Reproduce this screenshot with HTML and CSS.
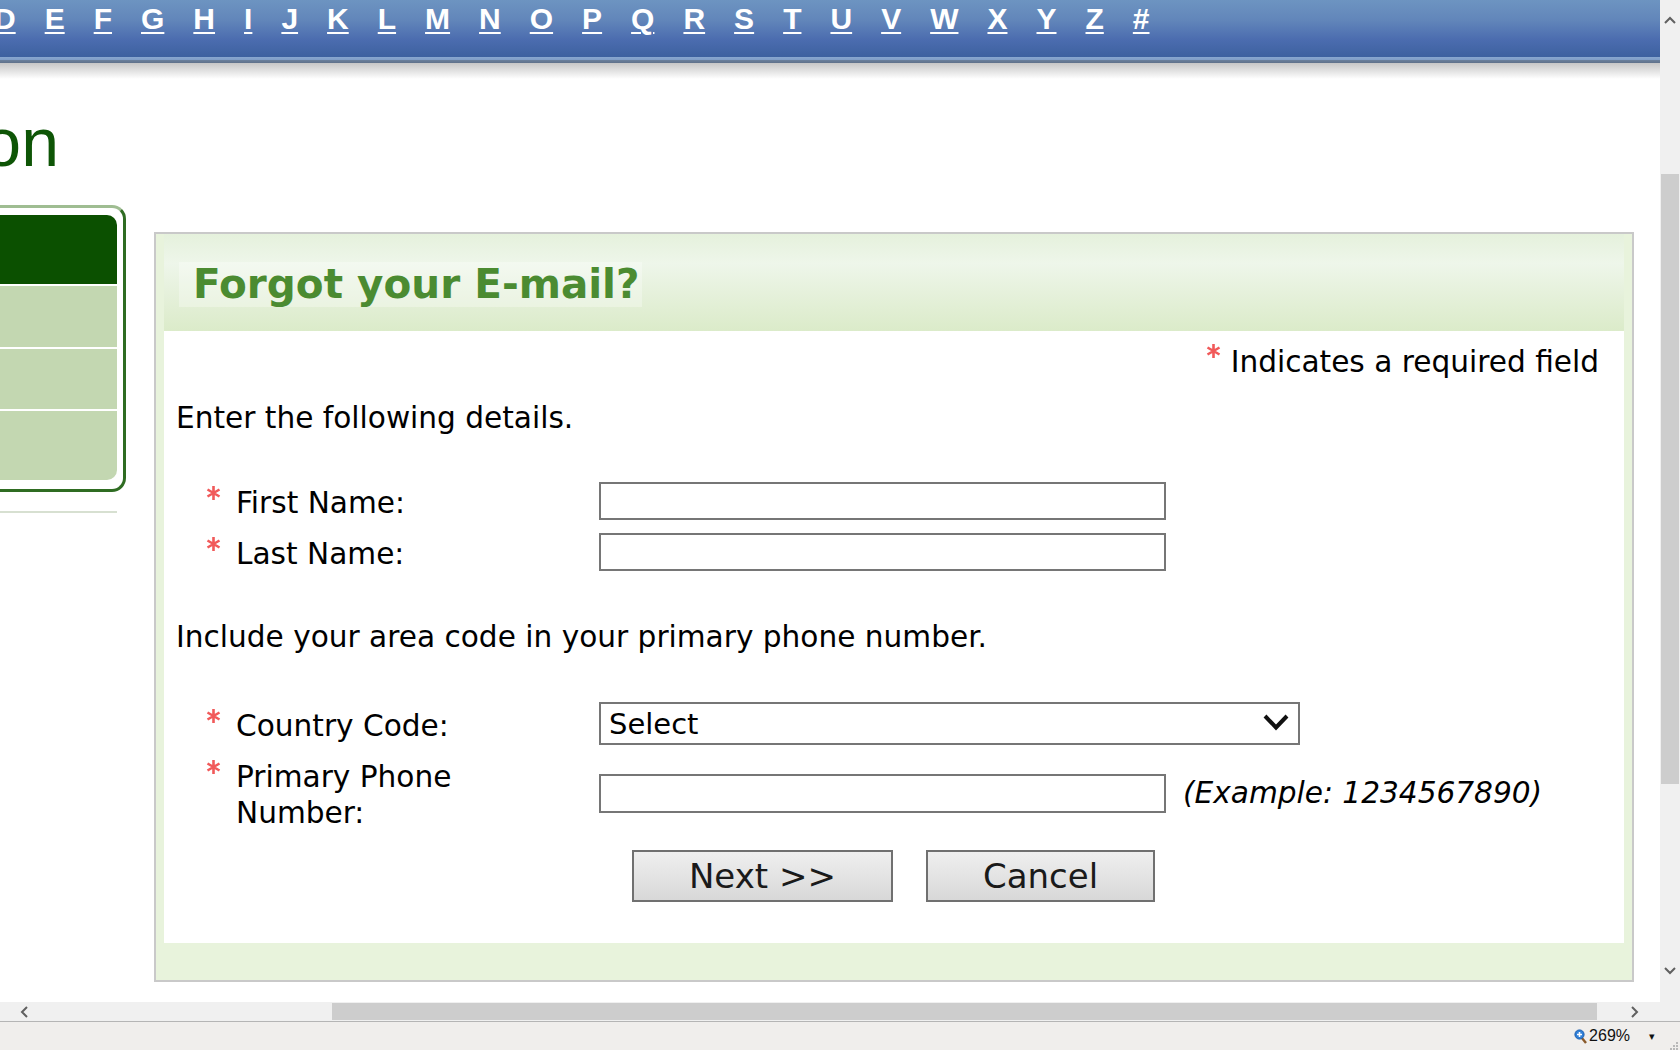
FILE: index.html
```html
<!DOCTYPE html>
<html lang="en">
<head>
    <meta charset="UTF-8">
    <meta name="viewport" content="width=device-width, initial-scale=1.0">
    <title>Forgot your E-mail?</title>
    <link rel="stylesheet" href="styles.css">
</head>
<body>
    <div class="window">
        <div class="frame">
            <div class="viewport">
                <div class="page">
                    <div class="alpha-bar">
                        <nav class="alpha">
                            <a href="#">D</a>
                            <a href="#">E</a><a href="#">F</a><a href="#">G</a><a href="#">H</a>
                            <a href="#">I</a><a href="#">J</a><a href="#">K</a><a href="#">L</a>
                            <a href="#">M</a><a href="#">N</a><a href="#">O</a><a href="#">P</a>
                            <a href="#">Q</a><a href="#">R</a><a href="#">S</a><a href="#">T</a>
                            <a href="#">U</a><a href="#">V</a><a href="#">W</a><a href="#">X</a>
                            <a href="#">Y</a><a href="#">Z</a><a href="#">#</a>
                        </nav>
                    </div>
                    <div class="alpha-rule"></div>
                    <div class="alpha-shadow"></div>

                    <h1 class="page-title">Registration</h1>

                    <div class="columns">
                        <aside class="side">
                            <div class="side-box">
                                <div class="side-head"></div>
                                <div class="side-item"></div>
                                <div class="side-item"></div>
                                <div class="side-item side-item-last"></div>
                            </div>
                            <div class="side-rule"></div>
                        </aside>

                        <section class="form-box">
                            <div class="form-head">
                                <h2>Forgot your E-mail?</h2>
                            </div>
                            <div class="form-body">
                                <p class="required-note">
                                    <svg class="star" viewBox="0 0 15 16" width="15" height="16"><path d="M7.5 1V15M1.5 4.5L13.5 11.5M1.5 11.5L13.5 4.5"/></svg>
                                    <span>Indicates a required field</span>
                                </p>
                                <p class="intro">Enter the following details.</p>

                                <div class="fields">
                                    <label class="field-label" for="first-name">
                                        <svg class="star" viewBox="0 0 15 16" width="15" height="16"><path d="M7.5 1V15M1.5 4.5L13.5 11.5M1.5 11.5L13.5 4.5"/></svg>
                                        <span>First Name:</span>
                                    </label>
                                    <input type="text" id="first-name" class="field-input">

                                    <label class="field-label" for="last-name">
                                        <svg class="star" viewBox="0 0 15 16" width="15" height="16"><path d="M7.5 1V15M1.5 4.5L13.5 11.5M1.5 11.5L13.5 4.5"/></svg>
                                        <span>Last Name:</span>
                                    </label>
                                    <input type="text" id="last-name" class="field-input">
                                </div>

                                <p class="intro intro-phone">Include your area code in your primary phone number.</p>

                                <div class="fields fields-phone">
                                    <label class="field-label" for="country-code">
                                        <svg class="star" viewBox="0 0 15 16" width="15" height="16"><path d="M7.5 1V15M1.5 4.5L13.5 11.5M1.5 11.5L13.5 4.5"/></svg>
                                        <span>Country Code:</span>
                                    </label>
                                    <div class="select-wrap">
                                        <select id="country-code" class="field-select">
                                            <option>Select</option>
                                        </select>
                                        <svg class="select-arrow" viewBox="0 0 26 18" width="26" height="18"><path d="M2 3L13 14.5L24 3"/></svg>
                                    </div>

                                    <label class="field-label" for="phone">
                                        <svg class="star" viewBox="0 0 15 16" width="15" height="16"><path d="M7.5 1V15M1.5 4.5L13.5 11.5M1.5 11.5L13.5 4.5"/></svg>
                                        <span>Primary Phone Number:</span>
                                    </label>
                                    <div class="phone-control">
                                        <input type="text" id="phone" class="field-input field-input-tall">
                                        <em class="example">(Example: 1234567890)</em>
                                    </div>
                                </div>

                                <div class="actions">
                                    <button class="btn">Next &gt;&gt;</button>
                                    <button class="btn">Cancel</button>
                                </div>
                            </div>
                            <div class="form-foot"></div>
                        </section>
                    </div>
                </div>
            </div>

            <div class="vscroll">
                <svg class="scroll-arrow" viewBox="0 0 12 8" width="12" height="8"><path d="M1 7L6 2L11 7"/></svg>
                <div class="vscroll-thumb"></div>
                <div class="scroll-space"></div>
                <svg class="scroll-arrow" viewBox="0 0 12 8" width="12" height="8"><path d="M1 1L6 6L11 1"/></svg>
            </div>
        </div>

        <div class="hbar">
            <div class="hscroll">
                <svg class="scroll-arrow" viewBox="0 0 8 12" width="8" height="12"><path d="M7 1L2 6L7 11"/></svg>
                <div class="hscroll-thumb"></div>
                <div class="scroll-space"></div>
                <svg class="scroll-arrow" viewBox="0 0 8 12" width="8" height="12"><path d="M1 1L6 6L1 11"/></svg>
            </div>
            <div class="corner"></div>
        </div>

        <div class="status">
            <svg class="zoom-icon" viewBox="0 0 13 15" width="13" height="15">
                <line x1="7.5" y1="8.5" x2="12" y2="14" stroke="#8a5a2b" stroke-width="2.4"/>
                <circle cx="5.5" cy="5.5" r="4.6" fill="#2f7fd8" stroke="#1d5fae" stroke-width="1"/>
                <path d="M5.5 3V8M3 5.5H8" stroke="#fff" stroke-width="1.6"/>
            </svg>
            <span class="zoom-level">269%</span>
            <span class="zoom-drop">&#9662;</span>
            <svg class="grip" viewBox="0 0 10 10" width="10" height="10">
                <rect x="8" y="2" width="2" height="2"/><rect x="5" y="5" width="2" height="2"/><rect x="8" y="5" width="2" height="2"/>
                <rect x="2" y="8" width="2" height="2"/><rect x="5" y="8" width="2" height="2"/><rect x="8" y="8" width="2" height="2"/>
            </svg>
        </div>
    </div>
</body>
</html>
```

FILE: styles.css
```css
body {
    margin: 0;
    overflow: hidden;
    background: #fff;
}
.window {
    display: flex;
    flex-direction: column;
    width: 1680px;
    height: 1050px;
}
.frame {
    display: flex;
    height: 1002px;
}
.viewport {
    flex: 1;
    overflow: hidden;
    background: #fff;
}

/* page is scrolled to the right, so the left part is cut off */
.page {
    margin-left: -340px;
    width: 2000px;
}
.alpha-bar {
    height: 57px;
    background: linear-gradient(#6d94c1, #6286ba 35%, #4b6caf 70%, #3d619f);
}
.alpha {
    display: flex;
    gap: 29px;
    padding: 2px 0 0 334px;
    font: bold 30px/34px "Liberation Sans", Arial, sans-serif;
}
.alpha a {
    color: #fff;
    text-decoration: underline;
    text-decoration-thickness: 2px;
    text-underline-offset: 3px;
}
.alpha-rule {
    height: 6px;
    background: linear-gradient(#88a7d0 0, #7f9dc6 50%, #6a809c 50%, #5f718a);
}
.alpha-shadow {
    height: 16px;
    background: linear-gradient(#c6c6c6, #fff);
}

.page-title {
    width: 399px;
    margin: 23px 0 0;
    text-align: right;
    font: normal 68px/80px "Liberation Sans Narrow", "Liberation Sans", Arial, sans-serif;
    color: #0e5506;
    white-space: nowrap;
    overflow: hidden;
}

.columns {
    display: flex;
    align-items: flex-start;
    gap: 28px;
    margin-top: 23px;
    padding-left: 266px;
}
.side {
    width: 200px;
}
.side-box {
    border: 3px solid #2f6c22;
    border-top-color: #9fbd92;
    border-radius: 14px;
    padding: 7px 6px 9px 6px;
}
.side-head {
    height: 69px;
    background: #0b5000;
    border-radius: 10px 10px 0 0;
}
.side-item {
    height: 61px;
    margin-top: 2px;
    background: #c3d7b1;
}
.side-item + .side-item {
    height: 60px;
}
.side-item.side-item-last {
    height: 69px;
    border-radius: 0 0 10px 10px;
}
.side-rule {
    height: 2px;
    margin: 19px 9px 0 0;
    background: #d7e0d1;
}

.form-box {
    width: 1460px;
    margin-top: 27px;
    border: 2px solid #c9c9c9;
    background: #e8f3dc;
    padding: 0 8px;
}
.form-head {
    padding: 28px 0 24px 15px;
    background: linear-gradient(#e5f1dc, #eef6ea 30%, #e6f1dc 60%, #dbebc9);
}
.form-head h2 {
    display: inline-block;
    margin: 0;
    padding: 0 2px 0 14px;
    background: rgba(255, 255, 255, 0.3);
    font: bold 40.5px/45px "DejaVu Sans", Verdana, sans-serif;
    color: #4b8b31;
}
.form-body {
    background: #fff;
    padding: 13px 25px 41px 12px;
    font: 29.6px/36px "DejaVu Sans", Verdana, sans-serif;
    color: #000;
}
.form-foot {
    height: 37px;
}

.star {
    display: block;
    flex: none;
    fill: none;
    stroke: #ef3d3d;
    stroke-width: 2.6;
    opacity: 0.85;
}
.required-note {
    display: flex;
    justify-content: flex-end;
    gap: 10px;
    margin: 0;
}
.required-note .star {
    margin-top: -1px;
}
.intro {
    margin: 20px 0 0;
}
.intro-phone {
    margin-top: 47px;
}

.fields {
    display: grid;
    grid-template-columns: 300px auto;
    column-gap: 93px;
    row-gap: 11px;
    align-items: center;
    justify-items: start;
    margin: 45px 0 0 30px;
}
.fields-phone {
    margin-top: 47px;
    row-gap: 10px;
}
.field-label {
    display: flex;
    gap: 15px;
    padding-top: 4px;
}
.field-input {
    box-sizing: border-box;
    width: 567px;
    height: 38px;
    margin: 0;
    border: 2px solid #767676;
    border-radius: 0;
    font: inherit;
}
.field-input-tall {
    height: 39px;
}
.select-wrap {
    position: relative;
    width: 701px;
}
.field-select {
    display: block;
    box-sizing: border-box;
    width: 100%;
    height: 43px;
    margin: 0;
    padding: 0 0 0 8px;
    border: 2px solid #767676;
    border-radius: 0;
    background: #fff;
    appearance: none;
    font: 29px "DejaVu Sans", Verdana, sans-serif;
    color: #000;
}
.select-arrow {
    position: absolute;
    top: 11px;
    right: 11px;
    fill: none;
    stroke: #111;
    stroke-width: 4;
}
.phone-control {
    display: flex;
    align-items: center;
    gap: 17px;
}
.example {
    font-style: italic;
    white-space: nowrap;
}

.actions {
    display: flex;
    justify-content: center;
    gap: 33px;
    margin: 19px 0 0 12px;
}
.btn {
    height: 52px;
    padding: 0 55px;
    border: 2px solid #707070;
    border-radius: 0;
    background: linear-gradient(#efefef, #d8d8d8);
    font: 34px "DejaVu Sans", Verdana, sans-serif;
    color: #1a1a1a;
    cursor: pointer;
}

/* browser chrome */
.scroll-arrow {
    flex: none;
    fill: none;
    stroke: #606060;
    stroke-width: 2;
}
.scroll-space {
    flex: 1;
}
.vscroll {
    display: flex;
    flex-direction: column;
    align-items: center;
    width: 20px;
    padding: 16px 0 27px;
    box-sizing: border-box;
    background: #f0f0f0;
}
.vscroll-thumb {
    width: 18px;
    height: 610px;
    margin-top: 150px;
    background: #cdcdcd;
}
.hbar {
    display: flex;
    height: 19px;
}
.hscroll {
    flex: 1;
    display: flex;
    align-items: center;
    padding: 0 21px 0 20px;
    background: #f0f0f0;
}
.hscroll-thumb {
    width: 1265px;
    height: 17px;
    margin-left: 304px;
    background: #cdcdcd;
}
.corner {
    width: 20px;
    background: #f0f0f0;
}
.status {
    display: flex;
    align-items: center;
    justify-content: flex-end;
    height: 28px;
    border-top: 1px solid #b5b5b5;
    background: #f0eeec;
    padding-right: 2px;
    font: 16px "Liberation Sans", Arial, sans-serif;
    color: #111;
}
.zoom-icon {
    margin-right: 2px;
}
.zoom-level {
    margin-right: 19px;
}
.zoom-drop {
    font-size: 11px;
    margin-right: 13px;
}
.grip {
    align-self: flex-end;
    fill: #b8b8b8;
}
```
